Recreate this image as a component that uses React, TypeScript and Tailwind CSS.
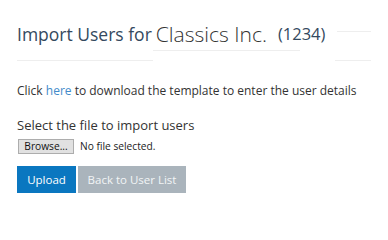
export default function App() {
  return (
    <div className="w-[388px] h-[225px] bg-white font-['Open_Sans',sans-serif] text-[#333]">
      <div className="px-[17px] pt-[20px]">
        <div className="flex items-end h-[28px]">
          <h1 className="text-[17.5px] leading-[28px] text-[#34495e] whitespace-nowrap">
            Import Users for
          </h1>
          <span className="ml-[4px] text-[21px] leading-[28px] font-light text-[#333] whitespace-nowrap">
            Classics Inc.
          </span>
          <span className="ml-[11px] text-[16.5px] leading-[28px] text-[#34495e] whitespace-nowrap">
            (1234)
          </span>
          <div className="ml-[12px] mb-[16px] w-[36px] border-t border-[#eee]" />
        </div>
        <div className="flex">
          <div className="w-[138px] mt-[12px] border-t border-[#eee]" />
          <div className="w-[150px] mt-[2px] border-t border-[#eee]" />
          <div className="w-[35px]" />
          <div className="w-[37px] mt-[12px] border-t border-[#eee]" />
        </div>
      </div>

      <div className="px-[17px] pt-[21px] text-[13px] leading-[18px]">
        <p className="text-[12px] whitespace-nowrap">
          Click <a className="text-[#428bca]">here</a> to download the template to enter the user details
        </p>
        <p className="mt-[16px] whitespace-nowrap">Select the file to import users</p>
        <div className="mt-[3px] flex items-center gap-[6px] text-[10.2px]">
          <span className="h-[15px] w-[56px] ml-px flex items-center justify-center bg-[#e1e1e1] border border-[#adadad] text-[#111] leading-none">
            Browse...
          </span>
          <span className="text-[#222]">No file selected.</span>
        </div>
        <div className="mt-[11px] flex gap-[2px]">
          <button className="h-[27px] w-[59px] bg-[#0a77c0] text-white text-[11.5px]">Upload</button>
          <button className="h-[27px] w-[108px] bg-[#aab4bc] text-[#f2f4f6] text-[11.5px]">
            Back to User List
          </button>
        </div>
      </div>
    </div>
  );
}
